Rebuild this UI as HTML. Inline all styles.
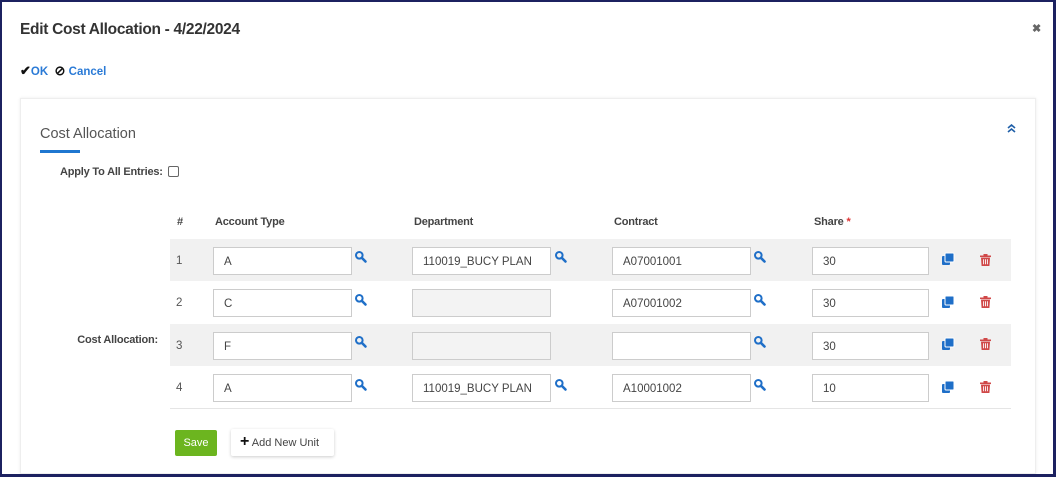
<!DOCTYPE html><html><head><style>
*{box-sizing:border-box;margin:0;padding:0}
html,body{width:1056px;height:477px;overflow:hidden}
body{background:#fff;font-family:"Liberation Sans",sans-serif;position:relative}
.frame{position:absolute;left:0;top:0;width:1056px;height:477px;border:2px solid #1c2160;border-right-width:3px;border-bottom-width:3px;z-index:5;pointer-events:none}
.abs{position:absolute}
.title{left:20px;top:21px;font-size:15.5px;color:#333;font-weight:bold;letter-spacing:-0.3px}
.card{left:20px;top:98px;width:1016px;height:376px;border:1px solid #eee;box-shadow:0 0 3px rgba(0,0,0,.08)}
.lbl{font-size:11px;color:#444;font-weight:bold;letter-spacing:-0.2px}
.inp{position:absolute;height:28px;border:1px solid #ccc;background:#fff;font-size:11.5px;color:#444;padding:8px 0 0 10px}
.dis{background:#f3f3f3}
.row{position:absolute;left:170px;width:841px;height:42px}
.g{background:#f1f1f1}
.n{position:absolute;left:176px;font-size:11.5px;color:#555}
</style></head><body>
<div class="frame"></div>
<div class="abs title">Edit Cost Allocation - 4/22/2024</div>
<div class="abs" style="left:1032px;top:22px;font-size:11px;color:#666;font-weight:bold">✖</div>
<div class="abs" style="left:20px;top:63px;font-size:11.5px;color:#2a7ad6;font-weight:bold"><span style="color:#111;font-size:13px">✔</span>OK&nbsp;&nbsp;<span style="color:#111;font-size:13px">⊘</span>&nbsp;Cancel</div>
<div class="abs card"></div>
<div class="abs" style="left:40px;top:126px;font-size:14.5px;color:#555">Cost Allocation</div>
<div class="abs" style="left:40px;top:150px;width:40px;height:3px;background:#1f77d0"></div>
<svg class="abs" style="left:1007px;top:124px" width="9" height="9"><path d="M1 4L4.5 1L8 4M1 8L4.5 5L8 8" fill="none" stroke="#1f5fa8" stroke-width="1.6"/></svg>
<div class="abs lbl" style="left:60px;top:166px">Apply To All Entries:</div>
<div class="abs" style="left:168px;top:166px;width:11px;height:11px;border:1px solid #666;border-radius:2px"></div>
<div class="abs lbl" style="left:60px;top:334px;width:98px;text-align:right">Cost Allocation:</div>
<div class="abs lbl" style="left:177px;top:216px">#</div>
<div class="abs lbl" style="left:215px;top:216px">Account Type</div>
<div class="abs lbl" style="left:414px;top:216px">Department</div>
<div class="abs lbl" style="left:614px;top:216px">Contract</div>
<div class="abs lbl" style="left:814px;top:216px">Share <span style="color:#d33">*</span></div>

<div class="row g" style="top:239px"></div>
<div class="row" style="top:281px"></div>
<div class="row g" style="top:324px"></div>
<div class="row" style="top:367px;border-bottom:1px solid #e5e5e5"></div>

<div class="n" style="top:255px">1</div>
<div class="inp" style="left:213px;top:247px;width:139px">A</div>
<div class="inp" style="left:412px;top:247px;width:139px">110019_BUCY PLAN</div>
<div class="inp" style="left:612px;top:247px;width:139px">A07001001</div>
<div class="inp" style="left:812px;top:247px;width:117px">30</div>
<div class="n" style="top:297px">2</div>
<div class="inp" style="left:213px;top:289px;width:139px">C</div>
<div class="inp dis" style="left:412px;top:289px;width:139px"></div>
<div class="inp" style="left:612px;top:289px;width:139px">A07001002</div>
<div class="inp" style="left:812px;top:289px;width:117px">30</div>
<div class="n" style="top:340px">3</div>
<div class="inp" style="left:213px;top:332px;width:139px">F</div>
<div class="inp dis" style="left:412px;top:332px;width:139px"></div>
<div class="inp" style="left:612px;top:332px;width:139px"></div>
<div class="inp" style="left:812px;top:332px;width:117px">30</div>
<div class="n" style="top:382px">4</div>
<div class="inp" style="left:213px;top:374px;width:139px">A</div>
<div class="inp" style="left:412px;top:374px;width:139px">110019_BUCY PLAN</div>
<div class="inp" style="left:612px;top:374px;width:139px">A10001002</div>
<div class="inp" style="left:812px;top:374px;width:117px">10</div>

<svg class="abs" style="left:0;top:0" width="1056" height="477">
<defs>
<g id="s"><circle cx="4.3" cy="4.3" r="3.3" fill="none" stroke="#1f6fc8" stroke-width="2"/><path d="M7 7L10.5 10.5" stroke="#1f6fc8" stroke-width="2.6" stroke-linecap="round"/></g>
<g id="c"><rect x="0" y="3" width="8" height="9" rx="1" fill="#1f6fc8"/><rect x="3" y="0" width="9" height="9" rx="1" fill="#1f6fc8" stroke="#fff" stroke-width="1"/></g>
<g id="t" fill="#d04848"><rect x="0" y="1.5" width="11" height="1.6"/><rect x="3.5" y="0" width="4" height="1.5"/><path d="M1 3.6h9l-.6 8.4h-7.8z"/><path d="M3.6 5.3v5M5.5 5.3v5M7.4 5.3v5" stroke="#fff" stroke-width=".9"/></g>
</defs>
<use href="#s" x="355" y="251"/><use href="#s" x="555" y="251"/><use href="#s" x="754" y="251"/>
<use href="#s" x="355" y="294"/><use href="#s" x="754" y="294"/>
<use href="#s" x="355" y="336"/><use href="#s" x="754" y="336"/>
<use href="#s" x="355" y="379"/><use href="#s" x="555" y="379"/><use href="#s" x="754" y="379"/>
<use href="#c" x="942" y="253"/><use href="#c" x="942" y="296"/><use href="#c" x="942" y="338"/><use href="#c" x="942" y="381"/>
<use href="#t" x="980" y="254"/><use href="#t" x="980" y="296"/><use href="#t" x="980" y="338"/><use href="#t" x="980" y="381"/>
</svg>

<div class="abs" style="left:175px;top:430px;width:42px;height:26px;background:#6cb51f;border-radius:2px;color:#fff;font-size:11px;padding-top:7px;text-align:center">Save</div>
<div class="abs" style="left:231px;top:429px;width:103px;height:27px;background:#fff;box-shadow:0 1px 3px rgba(0,0,0,.2);border-radius:2px;font-size:11px;color:#444;padding:8px 0 0 9px"><b style="font-size:16px;color:#111;line-height:10px">+</b> Add New Unit</div>
</body></html>
